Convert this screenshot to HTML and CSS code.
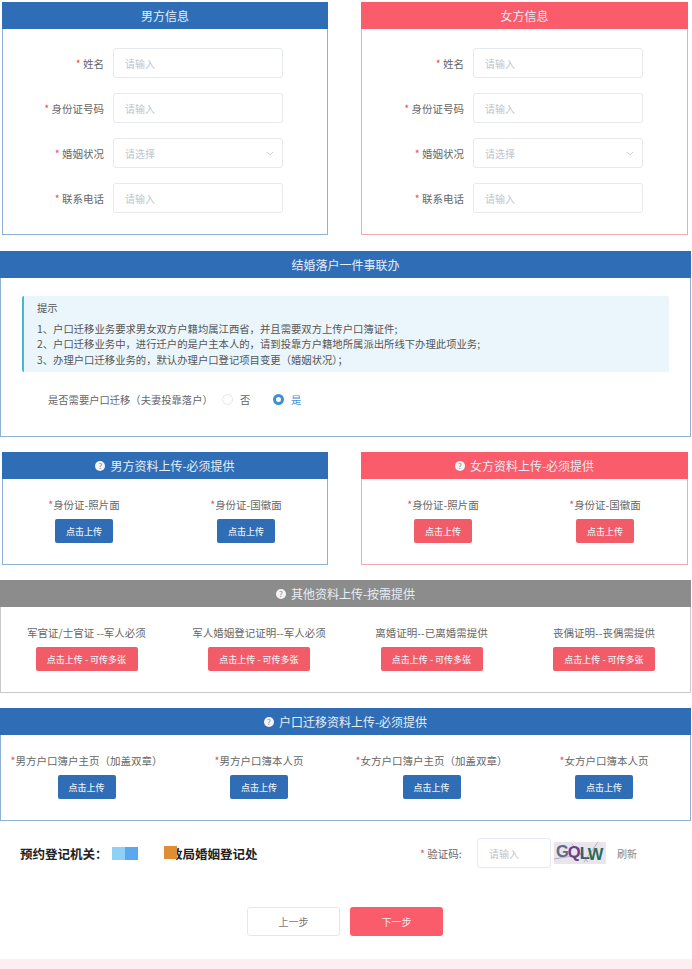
FILE: index.html
```html
<!DOCTYPE html>
<html lang="zh">
<head>
    <meta charset="UTF-8">
    <meta name="viewport" content="width=device-width, initial-scale=1.0">
    <title>结婚落户一件事联办</title>
    <link rel="stylesheet" href="styles.css">
</head>
<body>
    <div class="page">
        <!-- 双方信息 -->
        <div class="pair">
            <div class="panel panel-blue">
                <div class="panel-head">男方信息</div>
                <div class="form-body">
                    <div class="form-row"><label class="form-label"><i>*</i> 姓名</label><div class="input">请输入</div></div>
                    <div class="form-row"><label class="form-label"><i>*</i> 身份证号码</label><div class="input">请输入</div></div>
                    <div class="form-row"><label class="form-label"><i>*</i> 婚姻状况</label><div class="input select">请选择<svg class="chevron" viewBox="0 0 10 6"><path d="M1 1l4 4 4-4"/></svg></div></div>
                    <div class="form-row"><label class="form-label"><i>*</i> 联系电话</label><div class="input">请输入</div></div>
                </div>
            </div>
            <div class="panel panel-red">
                <div class="panel-head">女方信息</div>
                <div class="form-body">
                    <div class="form-row"><label class="form-label"><i>*</i> 姓名</label><div class="input">请输入</div></div>
                    <div class="form-row"><label class="form-label"><i>*</i> 身份证号码</label><div class="input">请输入</div></div>
                    <div class="form-row"><label class="form-label"><i>*</i> 婚姻状况</label><div class="input select">请选择<svg class="chevron" viewBox="0 0 10 6"><path d="M1 1l4 4 4-4"/></svg></div></div>
                    <div class="form-row"><label class="form-label"><i>*</i> 联系电话</label><div class="input">请输入</div></div>
                </div>
            </div>
        </div>

        <!-- 提示 -->
        <div class="panel panel-blue notice-panel">
            <div class="panel-head">结婚落户一件事联办</div>
            <div class="notice-body">
                <div class="tip">
                    <div class="tip-title">提示</div>
                    <div>1、户口迁移业务要求男女双方户籍均属江西省，并且需要双方上传户口簿证件;</div>
                    <div>2、户口迁移业务中，进行迁户的是户主本人的，请到投靠方户籍地所属派出所线下办理此项业务;</div>
                    <div>3、办理户口迁移业务的，默认办理户口登记项目变更（婚姻状况）；</div>
                </div>
                <div class="radio-row">
                    <span class="radio-label">是否需要户口迁移（夫妻投靠落户）</span>
                    <span class="radio"></span><span class="radio-text">否</span>
                    <span class="radio radio-on"></span><span class="radio-text radio-text-on">是</span>
                </div>
            </div>
        </div>

        <!-- 双方资料 -->
        <div class="pair">
            <div class="panel panel-blue">
                <div class="panel-head"><span class="help">?</span>男方资料上传-必须提供</div>
                <div class="upload-grid cols-2">
                    <div class="upload"><div class="upload-name"><i>*</i>身份证-照片面</div><button class="btn btn-blue">点击上传</button></div>
                    <div class="upload"><div class="upload-name"><i>*</i>身份证-国徽面</div><button class="btn btn-blue">点击上传</button></div>
                </div>
            </div>
            <div class="panel panel-red">
                <div class="panel-head"><span class="help">?</span>女方资料上传-必须提供</div>
                <div class="upload-grid cols-2">
                    <div class="upload"><div class="upload-name"><i>*</i>身份证-照片面</div><button class="btn btn-red">点击上传</button></div>
                    <div class="upload"><div class="upload-name"><i>*</i>身份证-国徽面</div><button class="btn btn-red">点击上传</button></div>
                </div>
            </div>
        </div>

        <!-- 其他资料 -->
        <div class="panel panel-gray wide-panel">
            <div class="panel-head"><span class="help">?</span>其他资料上传-按需提供</div>
            <div class="upload-grid cols-4">
                <div class="upload"><div class="upload-name">军官证/士官证 --军人必须</div><button class="btn btn-red btn-wide">点击上传 - 可传多张</button></div>
                <div class="upload"><div class="upload-name">军人婚姻登记证明--军人必须</div><button class="btn btn-red btn-wide">点击上传 - 可传多张</button></div>
                <div class="upload"><div class="upload-name">离婚证明--已离婚需提供</div><button class="btn btn-red btn-wide">点击上传 - 可传多张</button></div>
                <div class="upload"><div class="upload-name">丧偶证明--丧偶需提供</div><button class="btn btn-red btn-wide">点击上传 - 可传多张</button></div>
            </div>
        </div>

        <!-- 户口迁移资料 -->
        <div class="panel panel-blue wide-panel">
            <div class="panel-head"><span class="help">?</span>户口迁移资料上传-必须提供</div>
            <div class="upload-grid cols-4">
                <div class="upload"><div class="upload-name"><i>*</i>男方户口簿户主页（加盖双章）</div><button class="btn btn-blue">点击上传</button></div>
                <div class="upload"><div class="upload-name"><i>*</i>男方户口簿本人页</div><button class="btn btn-blue">点击上传</button></div>
                <div class="upload"><div class="upload-name"><i>*</i>女方户口簿户主页（加盖双章）</div><button class="btn btn-blue">点击上传</button></div>
                <div class="upload"><div class="upload-name"><i>*</i>女方户口簿本人页</div><button class="btn btn-blue">点击上传</button></div>
            </div>
        </div>

        <!-- 登记机关 + 验证码 -->
        <div class="office-row">
            <div class="office">
                <span class="office-label">预约登记机关：</span>
                <span class="mask-blue"></span>
                <span class="office-name">政局婚姻登记处<span class="mask-orange"></span></span>
            </div>
            <div class="captcha">
                <label class="captcha-label"><i>*</i> 验证码:</label>
                <div class="input captcha-input">请输入</div>
                <svg class="captcha-img" viewBox="0 0 52 22">
                    <rect width="52" height="22" fill="#e9e5ec"/>
                    <path d="M0 17L30 12M18 2L34 20M30 20L44 0" stroke="#a58fb0" stroke-width=".7" fill="none"/>
                    <text x="2" y="15"><tspan class="cap-g">G</tspan><tspan class="cap-q" dy="1">Q</tspan><tspan class="cap-l" dy="1">L</tspan><tspan class="cap-w" dy="1">W</tspan></text>
                </svg>
                <span class="refresh">刷新</span>
            </div>
        </div>

        <div class="steps">
            <button class="step-btn step-prev">上一步</button>
            <button class="step-btn step-next">下一步</button>
        </div>

        <div class="pink-bar"></div>
    </div>
</body>
</html>
```

FILE: styles.css
```css
* {
    box-sizing: border-box;
}
body {
    margin: 0;
    background: #fff;
    color: #666;
    font-family: "Noto Sans CJK SC", "Noto Sans", sans-serif;
    font-size: 10.5px;
}
i {
    font-style: normal;
    color: #e8505b;
}
.page {
    width: 692px;
    height: 969px;
    padding-top: 2px;
    overflow: hidden;
}
.pair {
    display: grid;
    grid-template-columns: 326px 327px;
    column-gap: 33px;
    padding-left: 2px;
}

/* 面板 */
.panel {
    border: 1px solid #8fb2d4;
    background: #fff;
}
.panel-head {
    display: flex;
    justify-content: center;
    align-items: center;
    height: 27px;
    margin: -1px -1px 0;
    color: #e6eef7;
    font-size: 12px;
}
.panel-blue .panel-head { background: #2f6eb6; }
.panel-red { border-color: #f2a9b0; }
.panel-red .panel-head { background: #fa5c6b; }
.panel-gray { border-color: #c9c9c9; }
.panel-gray .panel-head { background: #8c8c8c; }
.help {
    width: 10px;
    height: 10px;
    margin-right: 5px;
    border-radius: 50%;
    background: #f4f4f4;
    color: #888;
    font-size: 8px;
    line-height: 10px;
    text-align: center;
}

/* 个人信息表单 */
.form-body {
    display: flex;
    flex-direction: column;
    gap: 15px;
    height: 205px;
    padding-top: 19px;
}
.form-row {
    display: flex;
    align-items: center;
    gap: 9px;
}
.panel-red .form-row {
    padding-left: 1px;
}
.form-label {
    width: 101px;
    text-align: right;
    white-space: nowrap;
}
.input {
    display: flex;
    align-items: center;
    justify-content: space-between;
    width: 170px;
    height: 30px;
    padding: 0 11px;
    border: 1px solid #e6e9ef;
    border-radius: 3px;
    color: #c0c4cc;
    font-size: 10px;
}
.chevron {
    width: 8px;
    height: 5px;
    margin-right: -3px;
    fill: none;
    stroke: #c0c4cc;
    stroke-width: 1;
}

/* 提示 */
.notice-panel {
    height: 186px;
    margin-top: 16px;
    margin-right: 1px;
}
.notice-panel + .pair {
    margin-top: 15px;
}
.notice-body {
    padding: 18px 21px 0;
}
.tip {
    height: 76px;
    padding: 4px 13px 0;
    border-left: 2px solid #4ab6d6;
    border-radius: 2px;
    background: #ebf5fc;
    color: #555;
    font-size: 10.35px;
    line-height: 15.5px;
}
.tip-title {
    margin-bottom: 5px;
}
.radio-row {
    display: flex;
    align-items: center;
    margin-top: 20px;
    padding-left: 26px;
    font-size: 10.3px;
}
.radio-label {
    width: 174px;
    white-space: nowrap;
}
.radio {
    width: 11px;
    height: 11px;
    border: 1px solid #e3e6eb;
    border-radius: 50%;
}
.radio-on {
    border: 3px solid #3f8fd4;
    background: #fff;
}
.radio-text {
    width: 40px;
    padding-left: 7px;
}
.radio-text-on {
    color: #3f8fd4;
}

/* 上传 */
.wide-panel {
    height: 113px;
    margin-top: 15px;
    margin-right: 1px;
}
.upload-grid {
    display: grid;
    padding-top: 17px;
}
.cols-2 {
    grid-template-columns: 162px 162px;
    height: 85px;
}
.cols-4 {
    grid-template-columns: 173px 172px 173px 172px;
    margin: 0 -1px;
}
.upload {
    display: flex;
    flex-direction: column;
    align-items: center;
    gap: 5px;
}
.upload-name {
    height: 18px;
    line-height: 18px;
    white-space: nowrap;
}
.btn {
    width: 58px;
    height: 24px;
    padding: 0;
    border: 0;
    border-radius: 2px;
    color: #e9eef5;
    font-family: inherit;
    font-size: 9px;
    font-weight: 500;
}
.btn-blue { background: #2f6eb6; }
.btn-red { background: #f25c68; }
.btn-wide { width: 102px; }

/* 登记机关、验证码 */
.office-row {
    display: flex;
    justify-content: space-between;
    align-items: center;
    height: 30px;
    margin-top: 17px;
    padding: 0 55px 0 20px;
}
.office {
    display: flex;
    align-items: center;
    color: #222;
    font-size: 12.5px;
    font-weight: 700;
}
.office-label {
    width: 92px;
    white-space: nowrap;
}
.mask-blue {
    width: 26px;
    height: 13px;
    background: linear-gradient(90deg, #8fd1f6 50%, #5aa9ef 50%);
}
.office-name {
    position: relative;
    margin-left: 32px;
    white-space: nowrap;
}
.mask-orange {
    position: absolute;
    left: -6px;
    top: 2px;
    width: 13px;
    height: 13px;
    background: #e08e33;
}
.captcha {
    display: flex;
    align-items: center;
}
.captcha-label {
    width: 57px;
    white-space: nowrap;
}
.captcha-input {
    width: 74px;
}
.captcha-img {
    width: 52px;
    height: 22px;
    margin-left: 3px;
}
.captcha-img text {
    font-family: "Liberation Sans", sans-serif;
    font-size: 16.5px;
    font-weight: 700;
    letter-spacing: -1px;
}
.cap-g { fill: #5c6a86; }
.cap-q { fill: #6d3c86; }
.cap-l { fill: #3d5a6a; }
.cap-w { fill: #2c6a5c; }
.refresh {
    margin-left: 11px;
    color: #888;
    font-size: 10px;
}

/* 步骤按钮 */
.steps {
    display: flex;
    justify-content: center;
    gap: 10px;
    margin-top: 39px;
    padding-right: 2px;
}
.step-btn {
    width: 93px;
    height: 29px;
    border-radius: 3px;
    font-family: inherit;
    font-size: 10px;
}
.step-prev {
    border: 1px solid #e4e7ed;
    background: #fff;
    color: #777;
}
.step-next {
    border: 0;
    background: #fa5c6b;
    color: #ffe9ea;
}
.pink-bar {
    height: 10px;
    margin-top: 23px;
    background: #fdeef2;
}
```
